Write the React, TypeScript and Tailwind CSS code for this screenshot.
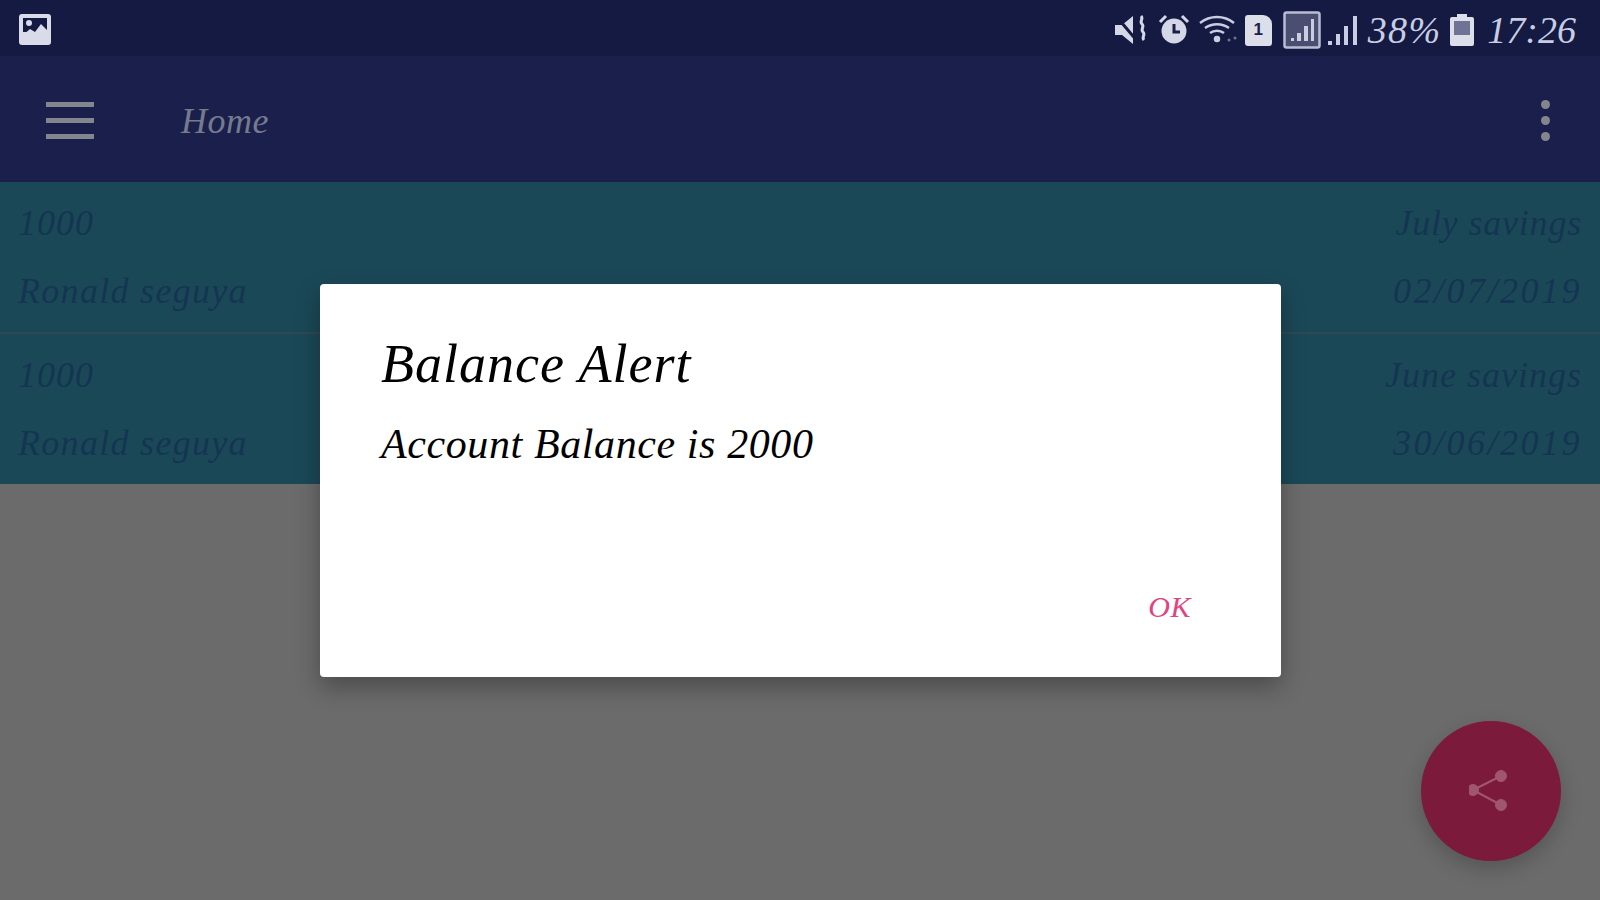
const hand = "font-['Liberation_Serif',serif] italic";

function Row({ a, b, c, d, bt }: { a: string; b: string; c: string; d: string; bt: string }) {
  return (
    <div className={`h-[150px] bg-[#1b4857] text-[#143552] text-[36px] leading-[40px] px-[18px] pt-[21px] flex flex-col gap-[28px] ${hand}`}>
      <div className="flex justify-between">
        <span className="tracking-[1px]">{a}</span>
        <span className={bt}>{b}</span>
      </div>
      <div className="flex justify-between">
        <span className="tracking-[1.3px]">{c}</span>
        <span className="tracking-[2.5px]">{d}</span>
      </div>
    </div>
  );
}

function StatusIcons() {
  return (
    <div className="flex items-center h-full gap-[9px] text-[#c9cde2]">
      <svg width="36" height="32" viewBox="0 0 36 32" fill="#d4d7e6" className="-mr-[1px]">
        <path d="M1 11h7l11-9v28l-11-9H1z" />
        <path d="M2 2l22 26" stroke="#141a42" strokeWidth="3" />
        <path d="M27 2c3 3-2 5 1 8s-2 5 1 8-2 5 1 8" fill="none" stroke="#d4d7e6" strokeWidth="3" />
      </svg>
      <svg width="32" height="32" viewBox="0 0 32 32">
        <circle cx="16" cy="17" r="12.5" fill="#d4d7e6" />
        <path d="M16 10v8h6" fill="none" stroke="#1a204b" strokeWidth="3" />
        <path d="M2 8l6-6M30 8l-6-6" stroke="#d4d7e6" strokeWidth="3" />
      </svg>
      <svg width="40" height="32" viewBox="0 0 40 32" fill="none" stroke="#c9cde2" strokeWidth="2.5" className="-mr-[3px]">
        <path d="M1 9c10-8 24-8 34 0" />
        <path d="M6 14c7-5 17-5 24 0" />
        <path d="M11 19c4-3 10-3 14 0" />
        <circle cx="18" cy="25" r="2" fill="#c9cde2" />
        <circle cx="30" cy="26" r="1.5" fill="#6f7496" stroke="none" />
        <circle cx="36" cy="24" r="1.5" fill="#6f7496" stroke="none" />
      </svg>
      <div className="w-[27px] h-[31px] bg-[#dcdeea] rounded-[3px] rounded-tr-[9px] flex items-center justify-center text-[#1a204b] text-[17px] font-bold font-['Liberation_Sans',sans-serif]">1</div>
      <svg width="38" height="38" viewBox="0 0 38 38" className="ml-[2px]">
        <rect x="1.5" y="1.5" width="35" height="35" rx="2" fill="#4a4f72" stroke="#b9bdd4" strokeWidth="2.5" />
        <path d="M8 30h3v-3H8zM14 30h4v-8h-4zM21 30h4V15h-4zM28 30h3V8h-3z" fill="#c9cde2" />
      </svg>
      <svg width="32" height="32" viewBox="0 0 32 32" fill="#c9cde2" className="-ml-[3px]">
        <path d="M1 27h4v4H1zM9 20h4v11H9zM17 12h4v19h-4zM26 2h4v29h-4z" />
      </svg>
      <span className={`text-[38px] leading-none tracking-[1.3px] ${hand}`}>38%</span>
      <svg width="24" height="32" viewBox="0 0 24 32">
        <path d="M7 0h10v3h5a2 2 0 0 1 2 2v25a2 2 0 0 1-2 2H2a2 2 0 0 1-2-2V5a2 2 0 0 1 2-2h5z" fill="#dcdeea" />
        <rect x="4" y="7" width="16" height="14" fill="#6f7496" />
      </svg>
      <span className={`text-[38px] leading-none ml-[4px] ${hand}`}>17:26</span>
    </div>
  );
}

export default function App() {
  return (
    <div className="relative w-[1600px] h-[900px] overflow-hidden bg-[#6b6b6b] flex flex-col">
      <div className="h-[56px] bg-[#141a42] flex items-center justify-between pl-[19px] pr-[24px] pt-[4px] shrink-0">
        <svg width="32" height="32" viewBox="0 0 32 32">
          <rect x="0" y="0" width="32" height="31" rx="3" fill="#d9dbe8" />
          <rect x="4" y="4" width="24" height="14" fill="#141a42" />
          <circle cx="10" cy="9" r="3" fill="#d9dbe8" />
          <path d="M4 21l7-6 5 3 6-8 6 6v5z" fill="#d9dbe8" />
        </svg>
        <StatusIcons />
      </div>
      <div className="h-[126px] bg-[#1a204b] flex items-center pl-[46px] pr-[50px] pt-[2px] shrink-0">
        <div className="w-[48px] flex flex-col gap-[11px]">
          <div className="h-[5px] bg-[#84868f]" />
          <div className="h-[5px] bg-[#84868f]" />
          <div className="h-[5px] bg-[#84868f]" />
        </div>
        <span className={`ml-[87px] mt-[2px] text-[36px] text-[#767a8f] tracking-[0.5px] ${hand}`}>Home</span>
        <div className="ml-auto flex flex-col gap-[7px]">
          <div className="w-[9px] h-[9px] rounded-full bg-[#84868f]" />
          <div className="w-[9px] h-[9px] rounded-full bg-[#84868f]" />
          <div className="w-[9px] h-[9px] rounded-full bg-[#84868f]" />
        </div>
      </div>
      <Row a="1000" b="July savings" c="Ronald seguya" d="02/07/2019" bt="tracking-[0.8px]" />
      <div className="h-[2px] bg-[#2e4a50]" />
      <Row a="1000" b="June savings" c="Ronald seguya" d="30/06/2019" bt="tracking-[1px]" />

      <div className="absolute left-[320px] top-[284px] w-[961px] h-[393px] bg-white rounded-[4px] shadow-[0_10px_24px_rgba(0,0,0,0.3)] pl-[61px] pr-[90px] pt-[48px] flex flex-col text-black">
        <div className={`text-[54px] leading-[64px] tracking-[1px] ${hand}`}>Balance Alert</div>
        <div className={`text-[42px] leading-[52px] mt-[22px] tracking-[0.6px] ${hand}`}>Account Balance is 2000</div>
        <div className={`mt-auto mb-[48px] self-end text-[30px] leading-[44px] text-[#e0457f] tracking-[0.5px] ${hand}`}>OK</div>
      </div>

      <div className="absolute left-[1421px] top-[721px] w-[140px] h-[140px] rounded-full bg-[#7b1a3a] shadow-[0_8px_20px_rgba(0,0,0,0.2)] flex items-center justify-center">
        <svg width="44" height="44" viewBox="0 0 44 44" fill="#a0566f" stroke="#a0566f">
          <path d="M4 21L32 7M4 21l28 15" strokeWidth="2" fill="none" />
          <circle cx="4" cy="21" r="5.5" />
          <circle cx="32" cy="7" r="5.5" />
          <circle cx="32" cy="36" r="5.5" />
        </svg>
      </div>
    </div>
  );
}
